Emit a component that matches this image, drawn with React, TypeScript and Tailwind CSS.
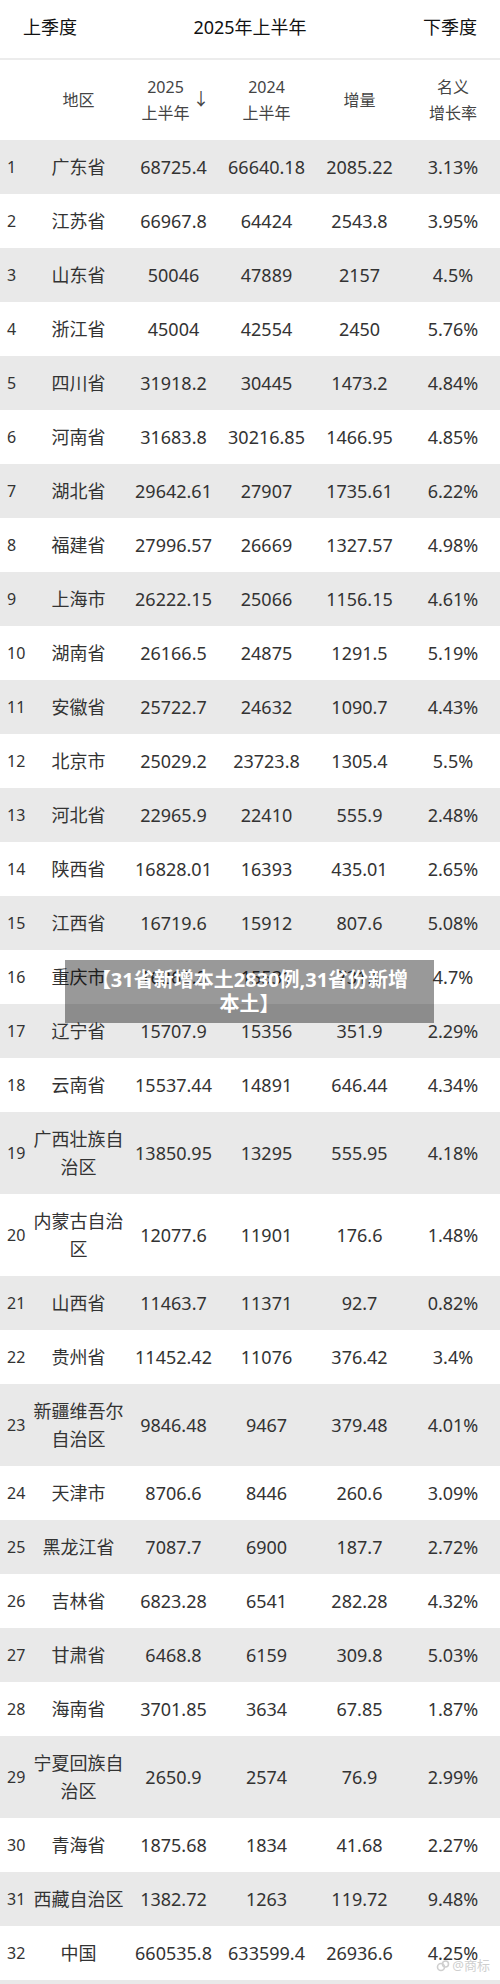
import React from "react";

type Row = [string, string, string, string, string];

const rows: Row[] = [
  ["广东省", "68725.4", "66640.18", "2085.22", "3.13%"],
  ["江苏省", "66967.8", "64424", "2543.8", "3.95%"],
  ["山东省", "50046", "47889", "2157", "4.5%"],
  ["浙江省", "45004", "42554", "2450", "5.76%"],
  ["四川省", "31918.2", "30445", "1473.2", "4.84%"],
  ["河南省", "31683.8", "30216.85", "1466.95", "4.85%"],
  ["湖北省", "29642.61", "27907", "1735.61", "6.22%"],
  ["福建省", "27996.57", "26669", "1327.57", "4.98%"],
  ["上海市", "26222.15", "25066", "1156.15", "4.61%"],
  ["湖南省", "26166.5", "24875", "1291.5", "5.19%"],
  ["安徽省", "25722.7", "24632", "1090.7", "4.43%"],
  ["北京市", "25029.2", "23723.8", "1305.4", "5.5%"],
  ["河北省", "22965.9", "22410", "555.9", "2.48%"],
  ["陕西省", "16828.01", "16393", "435.01", "2.65%"],
  ["江西省", "16719.6", "15912", "807.6", "5.08%"],
  ["重庆市", "16262.8", "15531", "731.8", "4.7%"],
  ["辽宁省", "15707.9", "15356", "351.9", "2.29%"],
  ["云南省", "15537.44", "14891", "646.44", "4.34%"],
  ["广西壮族自治区", "13850.95", "13295", "555.95", "4.18%"],
  ["内蒙古自治区", "12077.6", "11901", "176.6", "1.48%"],
  ["山西省", "11463.7", "11371", "92.7", "0.82%"],
  ["贵州省", "11452.42", "11076", "376.42", "3.4%"],
  ["新疆维吾尔自治区", "9846.48", "9467", "379.48", "4.01%"],
  ["天津市", "8706.6", "8446", "260.6", "3.09%"],
  ["黑龙江省", "7087.7", "6900", "187.7", "2.72%"],
  ["吉林省", "6823.28", "6541", "282.28", "4.32%"],
  ["甘肃省", "6468.8", "6159", "309.8", "5.03%"],
  ["海南省", "3701.85", "3634", "67.85", "1.87%"],
  ["宁夏回族自治区", "2650.9", "2574", "76.9", "2.99%"],
  ["青海省", "1875.68", "1834", "41.68", "2.27%"],
  ["西藏自治区", "1382.72", "1263", "119.72", "9.48%"],
  ["中国", "660535.8", "633599.4", "26936.6", "4.25%"],
];

const cols = "grid grid-cols-[30px_97px_93px_93px_93px_94px] items-center";

export default function App() {
  return (
    <div className="relative w-[500px] bg-white font-['Noto_Sans','Noto_Sans_CJK_SC',sans-serif] text-[#333]">
      {/* period switcher */}
      <div className="flex h-[60px] items-center justify-between border-b-2 border-[#ececec] px-[23px] pb-1 text-[18px] text-[#111]">
        <span>上季度</span>
        <span>2025年上半年</span>
        <span>下季度</span>
      </div>

      {/* column headers */}
      <div className={`${cols} h-[80px] text-center text-[16px] leading-[26px] text-[#444]`}>
        <div />
        <div>地区</div>
        <div className="flex items-center justify-center gap-[3px] pl-[4px]">
          <span>
            2025
            <br />
            上半年
          </span>
          <span className="-mt-[2px] text-[17px]">↓</span>
        </div>
        <div>
          2024
          <br />
          上半年
        </div>
        <div>增量</div>
        <div>
          名义
          <br />
          增长率
        </div>
      </div>

      {rows.map((r, i) => (
        <div
          key={r[0]}
          className={`${cols} py-[13px] text-center text-[18px] leading-[28px] ${i % 2 === 0 ? "bg-[#e9e9e9]" : "bg-white"}`}
        >
          <div className="pl-[7px] text-left text-[16px]">{i + 1}</div>
          <div className="px-[3px]">{r[0]}</div>
          <div>{r[1]}</div>
          <div>{r[2]}</div>
          <div>{r[3]}</div>
          <div>{r[4]}</div>
        </div>
      ))}
      <div className="h-1 bg-[#e9e9e9]" />

      {/* title banner over the table */}
      <div className="absolute left-[65px] top-[960px] flex h-[63px] w-[369px] items-center justify-center bg-black/40 text-center text-[20px] font-bold leading-[24px] text-white">
        <span>
          【31省新增本土2830例,31省份新增
          <br />
          本土】
        </span>
      </div>

      {/* watermark */}
      <div className="absolute right-[10px] top-[1956px] flex items-center gap-[2px] text-[13px] text-[#cfcfcf]">
        <svg width="14" height="14" viewBox="0 0 14 14" fill="none" stroke="#cfcfcf" strokeWidth="1.6">
          <circle cx="5" cy="8" r="3.5" />
          <circle cx="9.5" cy="5" r="3" />
        </svg>
        <span>@商标</span>
      </div>
    </div>
  );
}
